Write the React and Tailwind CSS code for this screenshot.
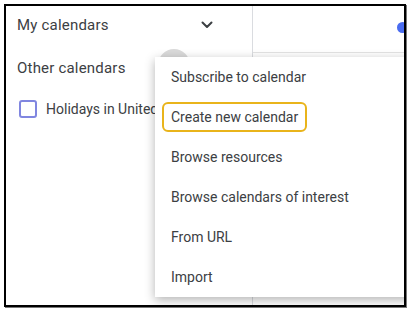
import React from 'react';

const menuItems = [
  'Subscribe to calendar',
  'Create new calendar',
  'Browse resources',
  'Browse calendars of interest',
  'From URL',
  'Import',
];

const Chevron = () => (
  <svg width="12" height="8" viewBox="0 0 12 8" fill="none">
    <path d="M1.5 1.5 L6 6 L10.5 1.5" stroke="#3c4043" strokeWidth="2" strokeLinecap="round" strokeLinejoin="round" />
  </svg>
);

export default function App() {
  return (
    <div className="w-[415px] h-[314px] bg-white overflow-hidden" style={{ fontFamily: 'Roboto, "Liberation Sans", sans-serif' }}>
      <div className="relative ml-[4px] mt-[4px] w-[402px] h-[303px] border-2 border-black shadow-[1px_1px_0_#777] overflow-hidden flex text-[#3c4043]">
        {/* Sidebar */}
        <div className="w-[247px] shrink-0 border-r border-[#dadce0] flex flex-col">
          <div className="h-[38px] flex items-center pl-[11px] pr-[39px] justify-between">
            <span className="text-[15px] tracking-[0.2px]">My calendars</span>
            <Chevron />
          </div>
          <div className="h-[48px] flex items-center pl-[11px]">
            <span className="text-[15px] tracking-[0.2px]">Other calendars</span>
            <div className="ml-[32px] -mt-[6px] w-[32px] h-[32px] rounded-full bg-[#dadada]" />
          </div>
          <div className="h-[34px] flex items-center pl-[13px] gap-[9px]">
            <div className="w-[18px] h-[18px] rounded-[3px] border-2 border-[#8086e0]" />
            <span className="text-[14px] whitespace-nowrap">Holidays in United States</span>
          </div>
        </div>

        {/* Main */}
        <div className="flex-1 flex flex-col">
          <div className="h-[47px] border-b border-[#e3e3e3] flex items-center justify-end">
            <div className="w-[11px] h-[11px] rounded-full bg-[#4a6cf0] -mr-[4px] mb-[3px]" />
          </div>
        </div>

        {/* Menu */}
        <div className="absolute left-[149px] top-[51px] w-[260px] bg-white shadow-[0_3px_10px_rgba(0,0,0,0.3)] flex flex-col">
          {menuItems.map((item, i) => (
            <div key={item} className="h-[40px] flex items-center text-[14px] text-[#3c4043] whitespace-nowrap">
              {i === 1 ? (
                <div className="ml-[7px] h-[30px] flex items-center px-[7px] border-2 border-[#e9b41b] rounded-[6px]">
                  {item}
                </div>
              ) : (
                <span className="pl-[16px]">{item}</span>
              )}
            </div>
          ))}
        </div>
      </div>
    </div>
  );
}
